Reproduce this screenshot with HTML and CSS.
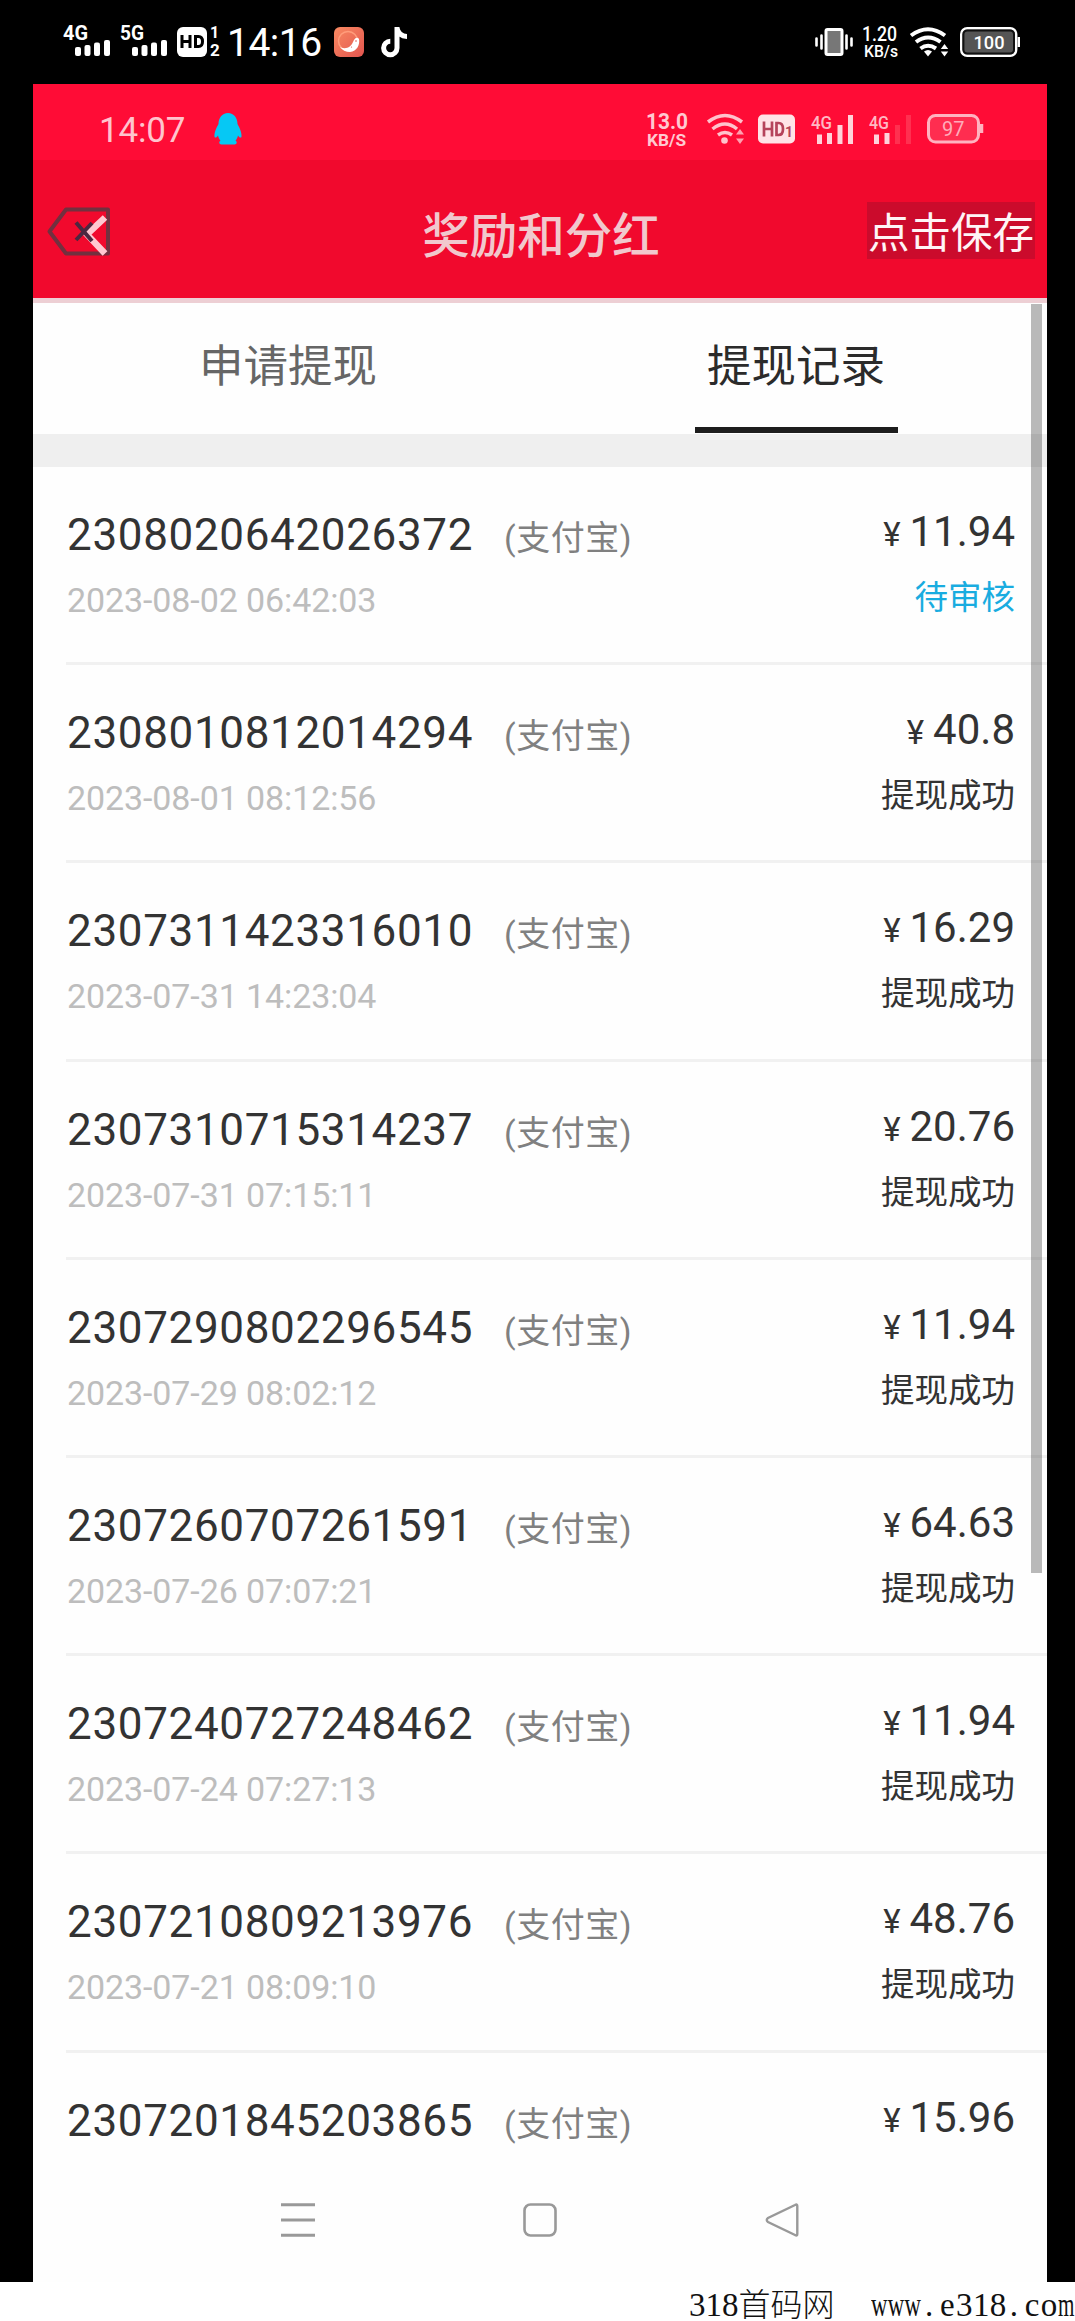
FILE: index.html
```html
<!DOCTYPE html>
<html lang="zh-CN">
<head>
<meta charset="utf-8">
<title>奖励和分红</title>
<link rel="stylesheet" href="styles.css">
</head>
<body>
<div class="device">
  <div class="sysbar">
    <div class="sys-left">
      <svg class="ic" width="48" height="32" viewBox="0 0 48 32"><text class="t-bold" x="0" y="15" font-size="21" textLength="25" lengthAdjust="spacingAndGlyphs">4G</text><g fill="#fff"><rect x="12" y="22" width="6" height="9" rx="2"/><rect x="21.500" y="20" width="6" height="11" rx="2"/><rect x="31" y="17.500" width="6" height="13.500" rx="2"/><rect x="41" y="15" width="6" height="16" rx="2"/></g></svg>
      <svg class="ic gap-9" width="48" height="32" viewBox="0 0 48 32"><text class="t-bold" x="0" y="15" font-size="21" textLength="24" lengthAdjust="spacingAndGlyphs">5G</text><g fill="#fff"><rect x="12" y="22" width="6" height="9" rx="2"/><rect x="21.500" y="20" width="6" height="11" rx="2"/><rect x="31" y="17.500" width="6" height="13.500" rx="2"/><rect x="41" y="15" width="6" height="16" rx="2"/></g></svg>
      <svg class="ic gap-9" width="43" height="32" viewBox="0 0 43 32"><rect x="0" y="2" width="30" height="30" rx="6" fill="#fff"/><g fill="none" stroke="#000" stroke-width="3"><path d="M5 10v13M13 10v13M5 16.500h8M18.500 11.500h3q4 0 4 5t-4 5h-3z"/></g><text class="t-bold" x="33" y="13" font-size="16">1</text><text class="t-bold" x="33" y="31" font-size="17">2</text></svg>
      <span class="clock">14:16</span>
      <svg class="ic gap-app" width="30" height="32" viewBox="0 0 30 32"><defs><linearGradient id="coral" x1="0" y1="0" x2="1" y2="1"><stop offset="0" stop-color="#f98a62"/><stop offset="1" stop-color="#e2554f"/></linearGradient></defs><rect y="2" width="30" height="30" rx="6" fill="url(#coral)"/><circle cx="14" cy="16" r="9.500" fill="none" stroke="#ff9d7c" stroke-width="1.500"/><path d="M6 22c6 3 11 0 13-5 1-3 4-6 6-3 1 6-2 12-9 13-4 0-8-2-10-5z" fill="#fff"/><circle cx="22" cy="16" r=".8" fill="#d9534d"/><circle cx="17.500" cy="22" r=".6" fill="#d9534d"/></svg>
      <svg class="ic gap-note" width="27" height="32" viewBox="0 0 27 32"><path d="M16 2v21a6.700 6.700 0 1 1-6.700-6.700M16 3c1 5 4 8.500 10 8.500" fill="none" stroke="#fff" stroke-width="5"/></svg>
    </div>
    <div class="sys-right">
      <svg class="ic" width="38" height="32" viewBox="0 0 38 32"><rect x="11" y="4.500" width="16" height="25" rx="1.500" fill="#777" stroke="#fff" stroke-width="3"/><path d="M1.500 13.500v7M6.500 10.500v13M31.500 10.500v13M36.500 13.500v7" stroke="#fff" stroke-width="2.600" stroke-linecap="round"/></svg>
      <svg class="ic gap-9" width="37" height="32" viewBox="0 0 37 32"><text class="t-med" x="0" y="16" font-size="19.500" textLength="35" lengthAdjust="spacingAndGlyphs">1.20</text><text class="t-med" x="2" y="32" font-size="16.500" textLength="34" lengthAdjust="spacingAndGlyphs">KB/s</text></svg>
      <svg class="ic gap-11" width="39" height="32" viewBox="0 0 39 32"><g fill="none" stroke="#fff" stroke-width="4"><path d="M1 10.500Q18 -2 35 10.500M6 17Q18 8 30.500 17M10.500 23.500Q18 18 26 23.500"/></g><path d="M18 31.500l-4-5q4-3 8 0z" fill="#fff"/><path d="M34.500 19l3.700 5h-7.400zM34.500 31.500l3.700-5h-7.400z" fill="#fff"/></svg>
      <svg class="ic gap-11" width="60" height="32" viewBox="0 0 60 32"><rect x="1.200" y="3.200" width="55" height="27.600" rx="6" fill="#555" stroke="#fff" stroke-width="2.400"/><rect x="3.400" y="5.400" width="50.600" height="23.200" rx="4" fill="none" stroke="#111" stroke-width="2"/><path d="M58.800 12v10" stroke="#fff" stroke-width="2.400"/><text class="t-med" x="13.500" y="24" font-size="19" textLength="31" lengthAdjust="spacingAndGlyphs">100</text></svg>
    </div>
  </div>

  <div class="screen">
    <div class="appbar-status">
      <span class="clock-in">14:07</span>
      <svg class="ic qq" width="28" height="32" viewBox="0 0 28 32"><path d="M14 0C8 0 4.500 5 4.500 11 3 14 0 19 .5 24c1 1.500 2.500 0 3.500-1.500 .5 2.500 1.500 4 2.500 5-2 1.500-1.500 3.500 1 4h13c2.500-.5 3-2.500 1-4 1-1 2-2.500 2.500-5 1 1.500 2.500 3 3.500 1.500C28 19 25 14 23.500 11 23.500 5 20 0 14 0z" fill="#06c8f4"/></svg>
      <div class="status-right">
        <svg class="ic" width="42" height="32" viewBox="0 0 42 32"><text class="p-bold" x="-1" y="16" font-size="21.500" textLength="42" lengthAdjust="spacingAndGlyphs">13.0</text><text class="p-bold" x="0" y="32.500" font-size="16" textLength="39" lengthAdjust="spacingAndGlyphs">KB/S</text></svg>
        <svg class="ic gap-wifi" width="38" height="32" viewBox="0 0 38 32"><g fill="none" stroke="#ffc2cc" stroke-width="3.500"><path d="M1 9Q18 -4 35 9M5.500 16Q18 6 30 16M11 22Q18 17 25 22"/></g><circle cx="17.500" cy="27.500" r="3.300" fill="#ffc2cc"/><path d="M33 16l4 5.500h-8zM33 31l4-5.500h-8z" fill="#ffa0b0"/></svg>
        <svg class="ic gap-hd" width="38" height="32" viewBox="0 0 38 32"><rect y="1.500" width="37" height="29" rx="5" fill="#ffe3e7"/><path d="M6 8.500v15M14 8.500v15M6 16h8M18.500 10h2q4.500 0 4.500 6t-4.500 6h-2z" fill="none" stroke="#b5435b" stroke-width="2.700"/><text class="hd-one" x="27" y="24" font-size="14">1</text></svg>
        <svg class="ic gap-sim" width="43" height="32" viewBox="0 0 43 32"><text class="p-med" x="0" y="15.500" font-size="19" textLength="21" lengthAdjust="spacingAndGlyphs">4G</text><g fill="#ffd3da"><rect x="6" y="21.500" width="5" height="9.500"/><rect x="16" y="20" width="5" height="11"/><rect x="26.500" y="12" width="5" height="19"/><rect x="37" y="2" width="5" height="29"/></g></svg>
        <svg class="ic gap-sim" width="43" height="32" viewBox="0 0 43 32"><text class="p-med" x="0" y="15.500" font-size="19" textLength="20" lengthAdjust="spacingAndGlyphs">4G</text><g fill="#ffd3da"><rect x="5" y="21.500" width="5" height="9.500"/><rect x="15.500" y="20" width="5" height="11"/></g><g fill="#ff3050"><rect x="26" y="12" width="5" height="19"/><rect x="37" y="2" width="5" height="29"/></g></svg>
        <svg class="ic gap-bat" width="58" height="32" viewBox="0 0 58 32"><rect x="2.500" y="2.500" width="50" height="26.500" rx="7" fill="#ff2d50" stroke="#ffb3c0" stroke-width="3"/><path d="M55.500 11v9" stroke="#ffb3c0" stroke-width="3.500"/><text class="p-thin" x="16" y="22.500" font-size="20">97</text></svg>
      </div>
    </div>

    <div class="header">
      <svg class="back" width="64" height="52" viewBox="0 0 64 52"><path d="M19 4.500h42v44H19L2.500 26.500z" fill="none" stroke="#72303f" stroke-width="4" stroke-linejoin="round"/><path d="M58 12.500L40 29.500 58 48.500" fill="none" stroke="#ffc8d1" stroke-width="6.500"/><path d="M29 17.500l16 18.500M45 18l-16 17" stroke="#4c2740" stroke-width="4"/></svg>
      <div class="title">奖励和分红</div>
      <div class="save">点击保存</div>
    </div>

    <div class="tabs">
      <div class="tab">申请提现</div>
      <div class="tab active">提现记录</div>
    </div>
    <div class="divider"></div>

    <div class="list">
      <div class="row"><div class="info"><div class="line"><span class="no">2308020642026372</span><span class="pay">(支付宝)</span></div><div class="date">2023-08-02 06:42:03</div></div><div class="sum"><div class="amount"><span class="yen">¥</span>11.94</div><div class="state pending">待审核</div></div></div>
      <div class="row"><div class="info"><div class="line"><span class="no">2308010812014294</span><span class="pay">(支付宝)</span></div><div class="date">2023-08-01 08:12:56</div></div><div class="sum"><div class="amount"><span class="yen">¥</span>40.8</div><div class="state">提现成功</div></div></div>
      <div class="row"><div class="info"><div class="line"><span class="no">2307311423316010</span><span class="pay">(支付宝)</span></div><div class="date">2023-07-31 14:23:04</div></div><div class="sum"><div class="amount"><span class="yen">¥</span>16.29</div><div class="state">提现成功</div></div></div>
      <div class="row"><div class="info"><div class="line"><span class="no">2307310715314237</span><span class="pay">(支付宝)</span></div><div class="date">2023-07-31 07:15:11</div></div><div class="sum"><div class="amount"><span class="yen">¥</span>20.76</div><div class="state">提现成功</div></div></div>
      <div class="row"><div class="info"><div class="line"><span class="no">2307290802296545</span><span class="pay">(支付宝)</span></div><div class="date">2023-07-29 08:02:12</div></div><div class="sum"><div class="amount"><span class="yen">¥</span>11.94</div><div class="state">提现成功</div></div></div>
      <div class="row"><div class="info"><div class="line"><span class="no">2307260707261591</span><span class="pay">(支付宝)</span></div><div class="date">2023-07-26 07:07:21</div></div><div class="sum"><div class="amount"><span class="yen">¥</span>64.63</div><div class="state">提现成功</div></div></div>
      <div class="row"><div class="info"><div class="line"><span class="no">2307240727248462</span><span class="pay">(支付宝)</span></div><div class="date">2023-07-24 07:27:13</div></div><div class="sum"><div class="amount"><span class="yen">¥</span>11.94</div><div class="state">提现成功</div></div></div>
      <div class="row"><div class="info"><div class="line"><span class="no">2307210809213976</span><span class="pay">(支付宝)</span></div><div class="date">2023-07-21 08:09:10</div></div><div class="sum"><div class="amount"><span class="yen">¥</span>48.76</div><div class="state">提现成功</div></div></div>
      <div class="row last"><div class="info"><div class="line"><span class="no">2307201845203865</span><span class="pay">(支付宝)</span></div></div><div class="sum"><div class="amount"><span class="yen">¥</span>15.96</div></div></div>
    </div>

    <div class="navbar">
      <svg width="34" height="34" viewBox="0 0 34 34"><path d="M0 1.700h34M0 17h34M0 32.300h34" stroke="#999" stroke-width="3"/></svg>
      <svg width="34" height="34" viewBox="0 0 34 34"><rect x="1.500" y="1.500" width="31" height="31" rx="6" fill="none" stroke="#999" stroke-width="2.600"/></svg>
      <svg width="34" height="34" viewBox="0 0 34 34"><path d="M30 2Q32.300 .5 32.300 3v28Q32.300 33.500 30 32L3 19Q.5 17 3 15z" fill="none" stroke="#999" stroke-width="2.400"/></svg>
    </div>
    <div class="scrollbar"></div>
  </div>
</div>
<div class="footer"><span class="site">318<span class="han">首码网</span></span><span class="url"><span class="w">www</span><span class="dot">.</span><span class="e">e</span>318<span class="dot">.</span><span class="e">c</span>o<span class="m">m</span></span></div>
</body>
</html>
```
FILE: styles.css
```css
* { box-sizing: border-box; }
body {
  margin: 0;
  width: 1075px;
  height: 2321px;
  overflow: hidden;
  background: #fff;
  font-family: Roboto, "Noto Sans CJK SC", sans-serif;
}
svg { display: block; flex: none; overflow: visible; }
.device {
  height: 2282px;
  padding: 0 28px 0 33px;
  background: #000;
}
.sysbar {
  height: 84px;
  display: flex;
  justify-content: space-between;
  padding: 25px 27px 0 30px;
}
.sys-left, .sys-right, .status-right { display: flex; align-items: flex-start; }
.t-bold { fill: #fff; font-weight: 700; }
.t-med { fill: #fff; font-weight: 500; }
.gap-9 { margin-left: 9px; }
.gap-11 { margin-left: 11px; }
.gap-app { margin-left: 13px; }
.gap-note { margin-left: 17px; }
.clock {
  width: 94px;
  margin-left: 7px;
  color: #fff;
  font-size: 39px;
  line-height: 36px;
  letter-spacing: -0.5px;
  white-space: nowrap;
}
.screen {
  position: relative;
  height: 2198px;
  background: #fefefe;
}
.appbar-status {
  height: 76px;
  display: flex;
  align-items: flex-start;
  padding: 29px 63px 0 66px;
  background: #ff0c36;
}
.clock-in {
  width: 88px;
  color: #ffc4cd;
  font-size: 35px;
  line-height: 35px;
  letter-spacing: -0.2px;
  white-space: nowrap;
}
.qq { margin-left: 27px; }
.status-right { margin-left: auto; }
.p-bold { fill: #ffc9d1; font-weight: 700; }
.p-med { fill: #ffb9c4; font-weight: 500; }
.p-thin { fill: #ffacba; }
.hd-one { fill: #b5435b; font-weight: 700; }
.gap-wifi { margin-left: 18px; }
.gap-hd { margin-left: 13px; }
.gap-sim { margin-left: 15px; }
.gap-bat { margin-left: 14px; }
.header {
  height: 143px;
  display: grid;
  grid-template-columns: 182px 1fr 182px;
  border-bottom: 5px solid #edcfd4;
  background: #f1092d;
}
.back { margin: 45px 0 0 14px; }
.title {
  margin-left: 2px;
  color: #f1c8cd;
  font-size: 47.5px;
  font-weight: 500;
  line-height: 154px;
  text-align: center;
}
.save {
  justify-self: end;
  width: 168px;
  height: 57px;
  margin: 42px 12px 0 0;
  background: #cb0b2c;
  color: #fff4f6;
  font-size: 41.5px;
  line-height: 63px;
  text-align: center;
  white-space: nowrap;
}
.tabs {
  height: 131px;
  display: flex;
}
.tab {
  flex: 1;
  display: flex;
  flex-direction: column;
  align-items: center;
  padding-left: 4px;
  color: #666;
  font-size: 44.5px;
  line-height: 128px;
}
.active {
  padding-left: 6px;
  color: #2b2b2b;
}
.active::after {
  content: "";
  width: 203px;
  height: 6px;
  margin-top: -4px;
  background: #1d1d1d;
}
.divider { height: 33px; background: #efefef; }
.list { margin-left: 33px; }
.row {
  height: 198.2px;
  display: flex;
  justify-content: space-between;
  padding: 37px 32px 0 1px;
  border-bottom: 3px solid #f1f1f1;
}
.last { height: 150px; border-bottom: 0; }
.line { display: flex; }
.no {
  width: 437px;
  color: #333;
  font-size: 44px;
  line-height: 62px;
  letter-spacing: 0.65px;
}
.pay {
  color: #808080;
  font-size: 34px;
  line-height: 68px;
  letter-spacing: 0.5px;
}
.date {
  height: 68px;
  margin-top: -6px;
  color: #bdbdbd;
  font-size: 34px;
  line-height: 68px;
  letter-spacing: -0.1px;
}
.sum { text-align: right; }
.amount {
  color: #333;
  font-size: 42px;
  line-height: 56px;
}
.yen { margin-right: 9px; font-size: 33px; }
.state {
  color: #333;
  font-size: 33.5px;
  line-height: 70px;
}
.pending { color: #19ace0; }
.navbar {
  display: flex;
  justify-content: space-between;
  padding: 0 248px;
}
.scrollbar {
  position: absolute;
  top: 220px;
  right: 5px;
  width: 11px;
  height: 1269px;
  background: rgba(0, 0, 0, 0.27);
}
.footer {
  height: 39px;
  display: flex;
  justify-content: flex-end;
  color: #111;
  font-family: "Liberation Serif", "Noto Sans CJK SC", serif;
  font-size: 33px;
  line-height: 47px;
  white-space: nowrap;
}
.site { width: 148px; }
.han { font-family: "Noto Sans CJK SC", sans-serif; font-size: 32px; font-weight: 300; line-height: 1; }
.url { width: 204px; margin-left: 34px; display: flex; letter-spacing: 0.4px; }
.w { width: 51px; transform: scaleX(0.69); transform-origin: left; }
.dot { width: 17px; padding-left: 3px; }
.e { width: 17px; padding-left: 1px; }
.m { width: 17px; transform: scaleX(0.64); transform-origin: left; }
```
